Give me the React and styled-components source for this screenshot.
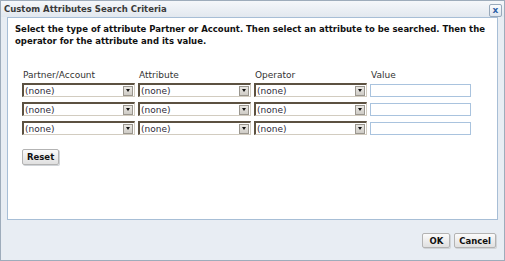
import React from "react";
import styled, { createGlobalStyle } from "styled-components";

const Global = createGlobalStyle`
  html, body { margin: 0; padding: 0; background: #ffffff; }
  body { font-family: "DejaVu Sans", Verdana, sans-serif; }
  * { box-sizing: border-box; }
`;

const Dialog = styled.div`
  width: 505px;
  height: 261px;
  border: 1px solid #9eacbb;
  background: #e8edf3;
  display: flex;
  flex-direction: column;
  font-family: "DejaVu Sans", Verdana, sans-serif;
  font-size: 9px;
  color: #222;
`;

const TitleBar = styled.div`
  height: 16px;
  flex: none;
  display: flex;
  align-items: center;
  justify-content: space-between;
  padding: 0 2px 0 3px;
  background: linear-gradient(#f5f7fa, #e2e8ef);
`;

const Title = styled.span`
  font-weight: bold;
  font-size: 8.5px;
  color: #3a3a3a;
`;

const CloseBtn = styled.button`
  width: 13px;
  height: 13px;
  margin-top: 2px;
  padding: 0;
  border: 1px solid #98a9bb;
  border-radius: 2px;
  background: linear-gradient(#fbfcfd, #dfe6ee);
  color: #3062a8;
  font-family: "DejaVu Sans", Verdana, sans-serif;
  font-size: 9px;
  font-weight: bold;
  line-height: 10px;
  display: flex;
  align-items: center;
  justify-content: center;
`;

const Panel = styled.div`
  flex: none;
  height: 203px;
  margin: 0 6px;
  background: #ffffff;
  border: 1px solid #a7bed6;
  padding: 5px 2px 0 7px;
`;

const Intro = styled.p`
  margin: 0;
  font-weight: bold;
  font-size: 8.5px;
  line-height: 12px;
  color: #111;
`;

const Form = styled.div`
  margin-top: 22px;
  padding-left: 7px;
`;

const Grid = styled.div`
  display: grid;
  grid-template-columns: 113px 113px 113px 101px;
  column-gap: 3px;
  row-gap: ${(p) => p.$rowGap}px;
`;

const Label = styled.div`
  font-size: 9px;
  line-height: 12px;
  color: #333;
  padding-left: 1px;
  margin-bottom: 2px;
`;

const Select = styled.div`
  height: 14px;
  display: flex;
  align-items: center;
  justify-content: space-between;
  background: #fff;
  border-top: 2px solid #5c5141;
  border-left: 2px solid #5c5141;
  border-right: 1px solid #d2ccc0;
  border-bottom: 1px solid #d2ccc0;
  padding-left: 1px;
  font-size: 9px;
  color: #2e2a3a;
`;

const Arrow = styled.span`
  width: 10px;
  height: 10px;
  margin-right: 1px;
  background: linear-gradient(#e9e7e3, #cfccc6);
  border: 1px solid #9a968e;
  display: flex;
  align-items: center;
  justify-content: center;
  &::after {
    content: "";
    border-left: 2.5px solid transparent;
    border-right: 2.5px solid transparent;
    border-top: 3px solid #111;
  }
`;

const Input = styled.input`
  height: 13px;
  margin-top: 1px;
  border: 1px solid #a9c3de;
  background: #fff;
  padding: 0;
  outline: none;
`;

const Button = styled.button`
  height: ${(p) => p.$h || 15}px;
  padding: 0 ${(p) => p.$px || 5}px;
  border: 1px solid #b3b3b3;
  border-radius: 2px;
  background: linear-gradient(#fbfbfb, #e0e0e0);
  font-family: "DejaVu Sans", Verdana, sans-serif;
  font-size: 8.5px;
  font-weight: bold;
  color: #111;
  box-shadow: 1px 1px 0 #d0d4d8;
`;

const ResetWrap = styled.div`
  margin-top: 14px;
`;

const Footer = styled.div`
  flex: 1;
  display: flex;
  justify-content: flex-end;
  align-items: flex-start;
  gap: 4px;
  padding: 13px 8px 0 0;
`;

const rows = [0, 1, 2];

export default function App() {
  return (
    <>
      <Global />
      <Dialog>
        <TitleBar>
          <Title>Custom Attributes Search Criteria</Title>
          <CloseBtn>x</CloseBtn>
        </TitleBar>
        <Panel>
          <Intro>
            Select the type of attribute Partner or Account. Then select an attribute to be searched. Then the
            operator for the attribute and its value.
          </Intro>
          <Form>
            <Grid $rowGap={0}>
              <Label>Partner/Account</Label>
              <Label>Attribute</Label>
              <Label>Operator</Label>
              <Label>Value</Label>
            </Grid>
            <Grid $rowGap={5}>
              {rows.map((r) => (
                <React.Fragment key={r}>
                  <Select>(none)<Arrow /></Select>
                  <Select>(none)<Arrow /></Select>
                  <Select>(none)<Arrow /></Select>
                  <Input />
                </React.Fragment>
              ))}
            </Grid>
            <ResetWrap>
              <Button $h={16} $px={4}>Reset</Button>
            </ResetWrap>
          </Form>
        </Panel>
        <Footer>
          <Button $px={6}>OK</Button>
          <Button $px={4}>Cancel</Button>
        </Footer>
      </Dialog>
    </>
  );
}
